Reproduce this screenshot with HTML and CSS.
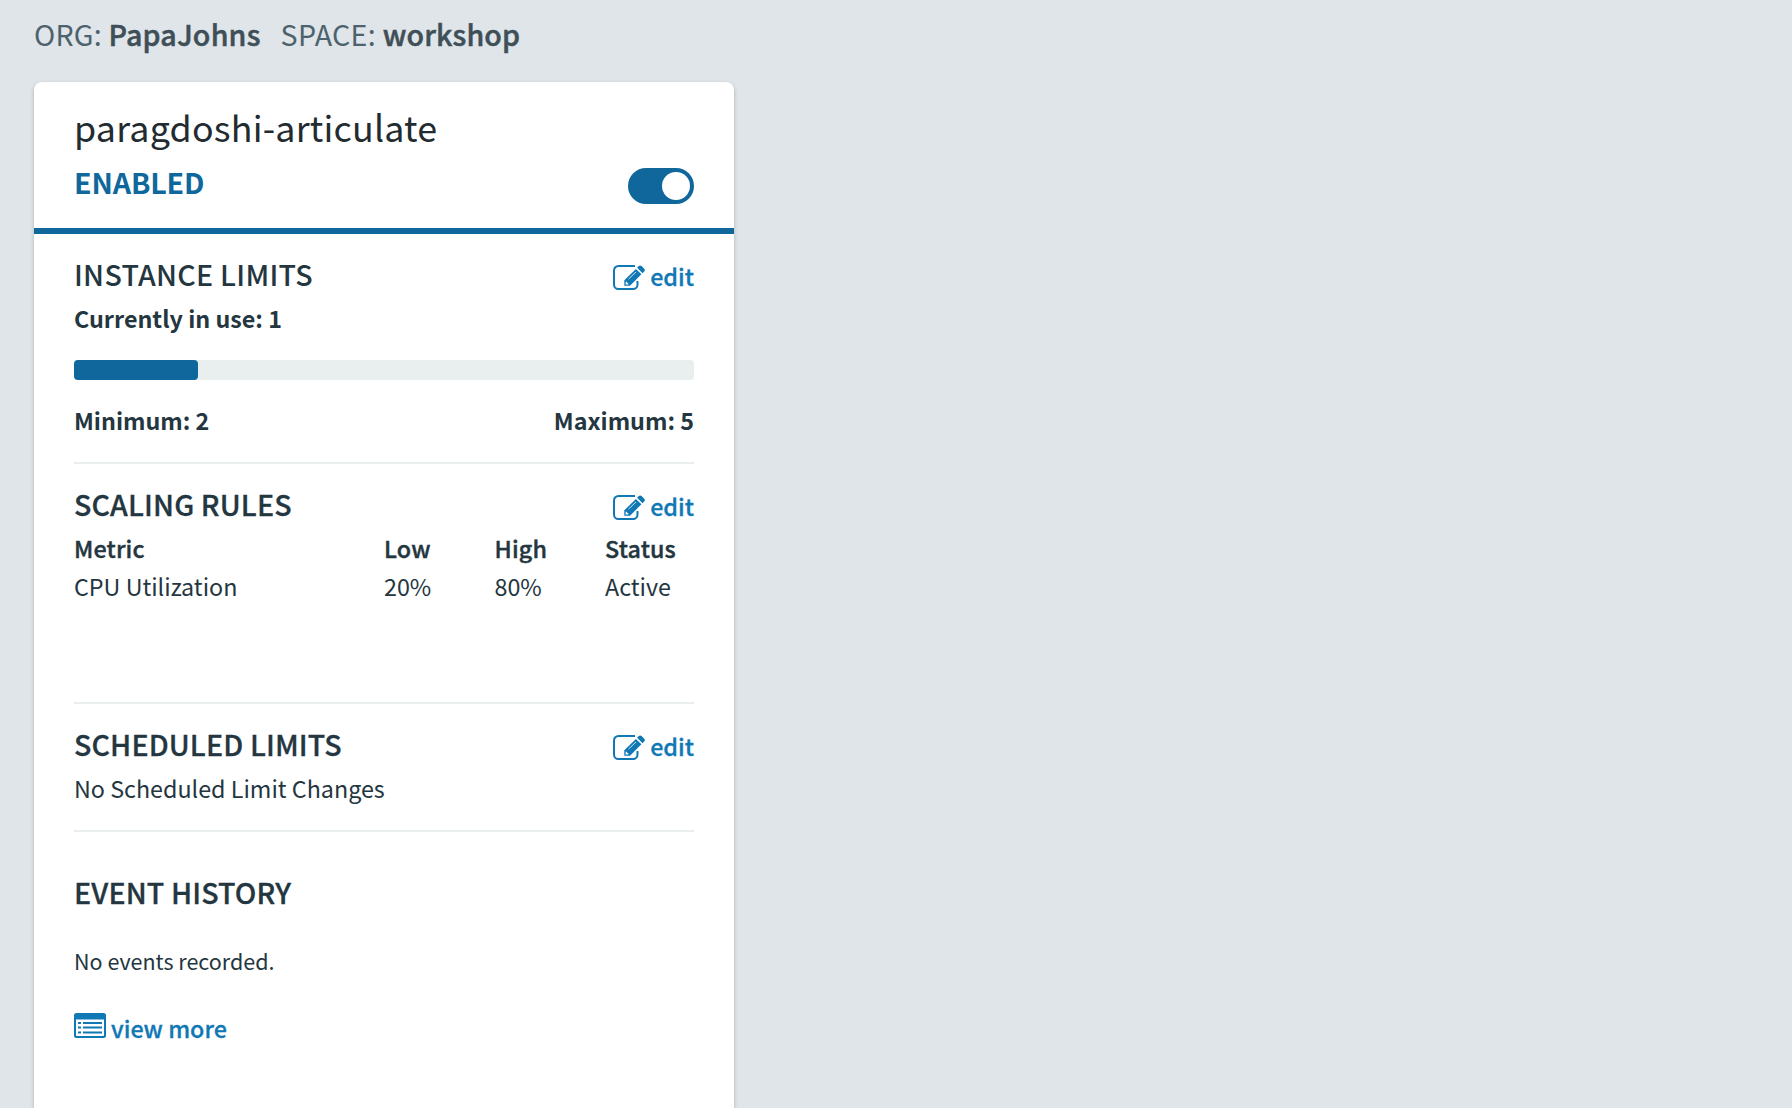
FILE: index.html
```html
<!DOCTYPE html>
<html lang="en">
<head>
<meta charset="utf-8">
<title>Autoscaler</title>
<link rel="stylesheet" href="styles.css">
</head>
<body>
<svg class="symbols" aria-hidden="true">
  <symbol id="icon-edit" viewBox="0 0 32 25">
    <path d="M22 1H5.500A4.500 4.500 0 0 0 1 5.500v14A4.500 4.500 0 0 0 5.500 24h14.500a4.500 4.500 0 0 0 4.500-4.500V16" fill="none" stroke="currentColor" stroke-width="2"/>
    <path d="M11.300 20.800V15.300L22.900 3.900l5.500 5.400L17 20.800zM24.100 2.800l1.700-1.700a2 2 0 0 1 2.800 0l2.600 2.600a2 2 0 0 1 0 2.800L29.500 8.200z" fill="currentColor"/>
    <path d="M15.600 14.100l7.400-7.200" stroke="#fff" stroke-width=".8" fill="none"/>
    <path d="M12.900 16.300l2.900 2.900-1.300.4-2-.1z" fill="#fff"/>
  </symbol>
</svg>
<header class="context">
  <span class="context-item">ORG: <strong>PapaJohns</strong></span>
  <span class="context-item">SPACE: <strong>workshop</strong></span>
</header>
<main class="card">
  <header class="card-header">
    <h1 class="app-name">paragdoshi-articulate</h1>
    <div class="state">
      <span class="state-label">ENABLED</span>
      <span class="toggle" role="switch" aria-checked="true"><span class="knob"></span></span>
    </div>
  </header>
  <section class="section">
    <div class="section-head">
      <h2 class="wide">INSTANCE LIMITS</h2>
      <a class="link"><svg class="icon"><use href="#icon-edit"/></svg>edit</a>
    </div>
    <p class="bold">Currently in use: 1</p>
    <div class="meter"><div class="meter-fill" style="width:20%"></div></div>
    <div class="range bold"><span>Minimum: 2</span><span>Maximum: 5</span></div>
  </section>
  <section class="section rules">
    <div class="section-head">
      <h2>SCALING RULES</h2>
      <a class="link"><svg class="icon"><use href="#icon-edit"/></svg>edit</a>
    </div>
    <div class="table">
      <span class="th">Metric</span><span class="th">Low</span><span class="th">High</span><span class="th">Status</span>
      <span>CPU Utilization</span><span>20%</span><span>80%</span><span>Active</span>
    </div>
  </section>
  <section class="section">
    <div class="section-head">
      <h2>SCHEDULED LIMITS</h2>
      <a class="link"><svg class="icon"><use href="#icon-edit"/></svg>edit</a>
    </div>
    <p>No Scheduled Limit Changes</p>
  </section>
  <section class="section history">
    <h2>EVENT HISTORY</h2>
    <p class="events">No events recorded.</p>
    <a class="link more">
      <svg class="icon" viewBox="0 0 32 25" fill="currentColor">
        <path fill-rule="evenodd" d="M2.500 0h27A2.500 2.500 0 0 1 32 2.500v20a2.500 2.500 0 0 1-2.500 2.500h-27A2.500 2.500 0 0 1 0 22.500v-20A2.500 2.500 0 0 1 2.500 0zM2 6.500v15.700a.8.8 0 0 0 .8.800h26.400a.8.8 0 0 0 .8-.8V6.500z"/>
        <path d="M4 9h3v2H4zM4 13.500h3v2H4zM4 18.500h3v2H4zM9 9h19v2H9zM9 13.500h19v2H9zM9 18.500h19v2H9z"/>
      </svg>view more</a>
  </section>
</main>
</body>
</html>
```
FILE: styles.css
```css
* { box-sizing: border-box; }

body {
  margin: 0;
  height: 1108px;
  overflow: hidden;
  display: flex;
  flex-direction: column;
  align-items: flex-start;
  background: #dfe5e8;
  color: #243640;
  font: 400 23.3px/36px "Noto Sans CJK SC", sans-serif;
  letter-spacing: 0;
  white-space: nowrap;
}

h1, h2, p { margin: 0; }

.symbols { display: none; }

.context {
  display: flex;
  gap: 20px;
  padding: 14px 34px 28px;
  font-size: 28.6px;
  line-height: 40px;
  letter-spacing: 0.2px;
  color: #4d626c;
}

.context strong {
  font-weight: 500;
  color: #3f4f58;
  -webkit-text-stroke: 0.5px;
}

.context-item + .context-item { letter-spacing: 0.3px; }
.context-item + .context-item strong { letter-spacing: 0.15px; }

.card {
  width: 700px;
  flex: 1;
  margin-left: 34px;
  background: #fff;
  border-radius: 8px 8px 0 0;
  box-shadow: 0 2px 4px rgba(0, 0, 0, 0.22);
}

.card-header {
  height: 152px;
  padding: 22px 40px 0;
  border-bottom: 6px solid #0f679c;
}

.app-name {
  font-size: 35.8px;
  line-height: 44px;
  font-weight: 400;
  letter-spacing: 0.2px;
  color: #222b2f;
}

.state {
  display: flex;
  justify-content: space-between;
  margin-top: 13px;
}

.state-label {
  margin-top: 1px;
  font-size: 28.6px;
  line-height: 40px;
  font-weight: 700;
  letter-spacing: -0.15px;
  color: #0f679c;
}

.toggle {
  display: flex;
  justify-content: flex-end;
  width: 66px;
  height: 36px;
  margin-top: 7px;
  padding: 4px;
  border-radius: 18px;
  background: #0f679c;
}

.knob {
  width: 28px;
  height: 28px;
  border-radius: 50%;
  background: #fff;
}

.section {
  margin: 0 40px;
  padding: 20px 0 24px;
  border-bottom: 2px solid #e9eeee;
}

.section-head {
  display: flex;
  justify-content: space-between;
  margin-bottom: 6px;
}

h2 {
  font-size: 28.6px;
  line-height: 40px;
  font-weight: 500;
  letter-spacing: 0.12px;
  -webkit-text-stroke: 0.3px;
}

h2.wide { letter-spacing: 0.28px; -webkit-text-stroke: 0; }

.bold { font-weight: 700; }

.link {
  display: flex;
  gap: 5px;
  height: 36px;
  margin-top: 4px;
  font-weight: 500;
  color: #1078b5;
  -webkit-text-stroke: 0.3px;
}

.icon {
  width: 32px;
  height: 25px;
  margin-top: 7px;
  overflow: visible;
}

.meter {
  height: 20px;
  margin: 24px 0 22px;
  border-radius: 4px;
  background: #e9eeee;
}

.meter-fill {
  height: 20px;
  border-radius: 4px;
  background: #0f679c;
}

.range {
  display: flex;
  justify-content: space-between;
}

.rules { height: 240px; }

.table {
  display: grid;
  grid-template-columns: 310px 110.5px 110.5px 1fr;
  row-gap: 2px;
}

.th {
  font-weight: 500;
  letter-spacing: 0.15px;
  -webkit-text-stroke: 0.4px;
}

.history {
  padding-top: 40px;
  border-bottom: 0;
}

.events {
  margin: 31px 0 31px;
  font-size: 21.5px;
}

.more { margin-top: 0; }
.more .icon { margin-top: 3px; }
```
